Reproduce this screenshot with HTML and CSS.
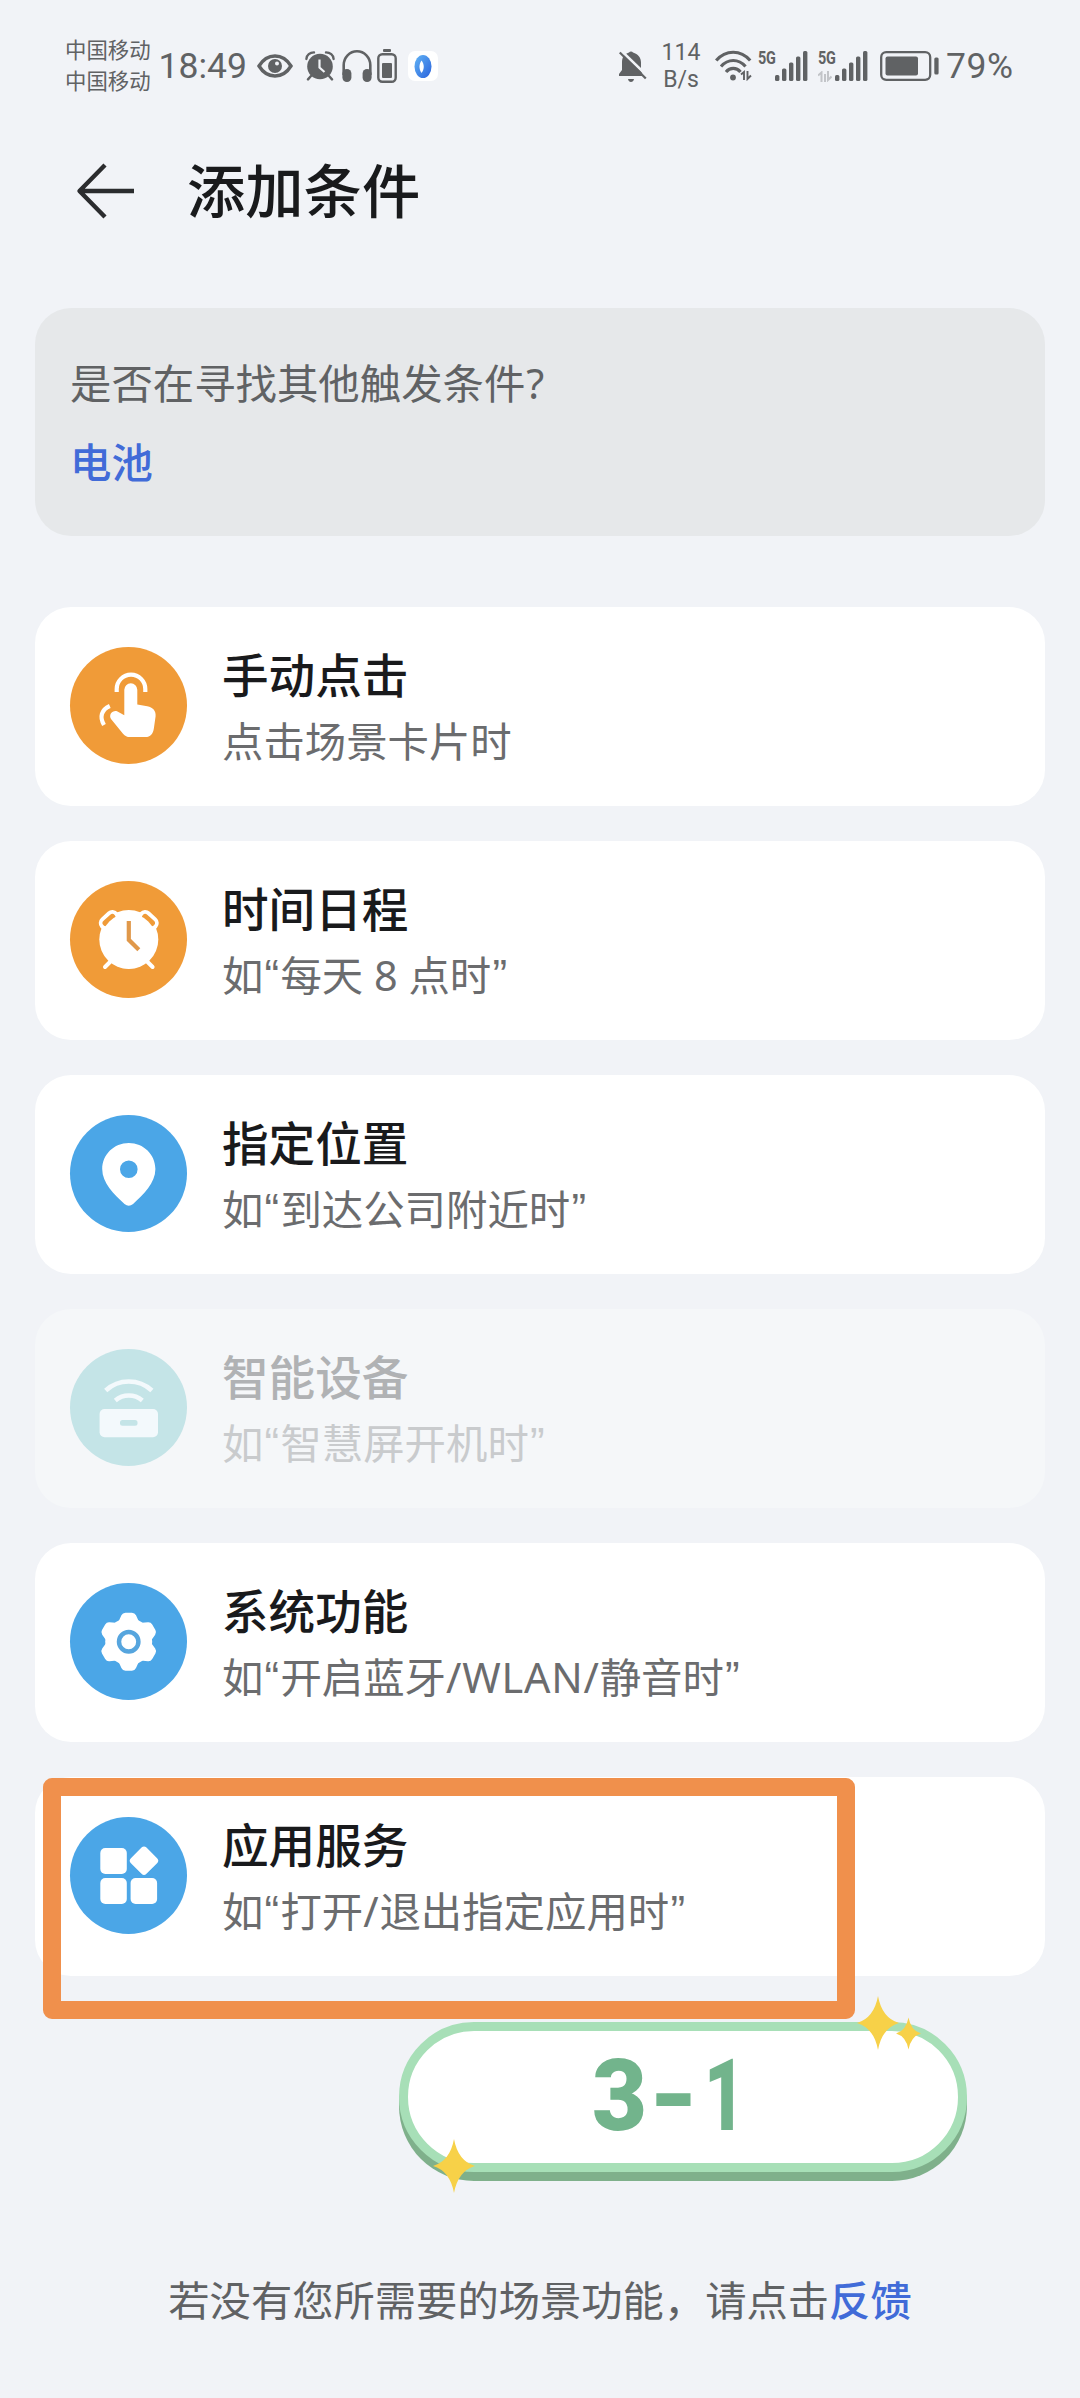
FILE: index.html
```html
<!DOCTYPE html>
<html lang="zh-CN">
<head>
<meta charset="utf-8">
<title>添加条件</title>
<link rel="stylesheet" href="styles.css">
</head>
<body>
<div class="screen">
  <div class="status">
    <div class="status-left">
      <div class="carrier"><span>中国移动</span><span>中国移动</span></div>
      <span class="clock">18:49</span>
      <svg class="i-eye" width="36" height="24" viewBox="0 0 36 24"><path d="M2 12C6 5.500 11.500 2 18 2s12 3.500 16 10c-4 6.500-9.500 10-16 10S6 18.500 2 12z" fill="none" stroke="#606264" stroke-width="3.400"/><circle cx="18" cy="12" r="7" fill="#606264"/><circle cx="20" cy="9.500" r="2" fill="#f1f3f7"/></svg>
      <svg class="i-alarm" width="30" height="30" viewBox="0 0 30 30"><g fill="none" stroke="#606264" stroke-width="2.400" stroke-linecap="round"><path d="M1.400 8C1.600 4 5 1.400 9 1.400M28.600 8C28.400 4 25 1.400 21 1.400M6 25l-3 3.400M24 25l3 3.400"/></g><circle cx="15" cy="15.500" r="12.800" fill="#606264"/><path d="M14.500 8.500v8l5 4.500" fill="none" stroke="#f1f3f7" stroke-width="2.200"/></svg>
      <svg class="i-phones" width="30" height="32" viewBox="0 0 30 32"><path d="M1.700 25V15a13.300 13.700 0 0 1 26.600 0v10" fill="none" stroke="#606264" stroke-width="2.600"/><rect x=".4" y="19" width="9" height="13" rx="4.400" fill="#606264"/><rect x="20.600" y="19" width="9" height="13" rx="4.400" fill="#606264"/></svg>
      <svg class="i-cell" width="20" height="34" viewBox="0 0 20 34"><rect x="6" y="0" width="8" height="3" rx="1" fill="#606264"/><rect x="1.300" y="5.300" width="17.400" height="27.400" rx="4" fill="none" stroke="#606264" stroke-width="2.400"/><rect x="5" y="14" width="10" height="15" rx="1" fill="#606264"/></svg>
      <svg class="i-app" width="30" height="30" viewBox="0 0 30 30"><defs><linearGradient id="ring" x1="0" y1="0" x2="1" y2="1"><stop offset="0" stop-color="#62b4f5"/><stop offset="1" stop-color="#2a62dc"/></linearGradient></defs><rect width="30" height="30" rx="7" fill="#fff"/><ellipse cx="15" cy="15.500" rx="8.500" ry="11.500" fill="url(#ring)"/><path d="M13.500 9.500c3 4 3 8.500 0 12.500-2.700-4-2.700-8.500 0-12.500z" fill="#fff"/></svg>
    </div>
    <div class="status-right">
      <svg class="i-bell" width="30" height="34" viewBox="0 0 30 34"><path d="M11 3.500a2.500 2.500 0 0 1 4 0c5 1.500 8 5 8 10V21l2 6H1v-2l3-4v-7.500c0-5 2-8.500 7-10zM10 30h6c-.5 4-5.500 4-6 0z" fill="#606264"/><path d="M3.500 2l26 25" stroke="#f1f3f7" stroke-width="2.600"/><path d="M1.800 3.500l26 26" stroke="#606264" stroke-width="2.200"/></svg>
      <div class="speed"><span>114</span><span>B/s</span></div>
      <svg class="i-wifi" width="37" height="31" viewBox="0 0 37 31"><g fill="none" stroke="#606264" stroke-width="3.200"><path d="M1.200 10.500c9.500-11 24.500-11 34 0M6 16.500c7-8 17.500-8 24.500 0M11 22c4-4.800 10.500-4.800 14.500 0"/></g><circle cx="18" cy="27.500" r="2.900" fill="#606264"/><path d="M26 24.500l3-2.500v8M32.500 21v8l3.500-3.500" fill="none" stroke="#606264" stroke-width="1.900"/></svg>
      <div class="signal">
        <div class="net"><span>5G</span></div>
        <svg width="33" height="30" viewBox="0 0 33 30"><g fill="#606264"><rect x="0" y="24" width="4.400" height="6" rx="1.500"/><rect x="7" y="17.500" width="4.400" height="12.500" rx="1.500"/><rect x="14" y="11.500" width="4.400" height="18.500" rx="1.500"/><rect x="21" y="5.500" width="4.400" height="24.500" rx="1.500"/><rect x="28" y="0" width="4.400" height="30" rx="1.500"/></g></svg>
      </div>
      <div class="signal">
        <div class="net"><span>5G</span><svg width="14" height="11" viewBox="0 0 14 11"><path d="M0 4.500L3.500 1.500V11M7 11V3M10 0v9l3.500-3.500" fill="none" stroke="#c2c4c8" stroke-width="2"/></svg></div>
        <svg width="33" height="30" viewBox="0 0 33 30"><g fill="#606264"><rect x="0" y="24" width="4.400" height="6" rx="1.500"/><rect x="7" y="17.500" width="4.400" height="12.500" rx="1.500"/><rect x="14" y="11.500" width="4.400" height="18.500" rx="1.500"/><rect x="21" y="5.500" width="4.400" height="24.500" rx="1.500"/><rect x="28" y="0" width="4.400" height="30" rx="1.500"/></g></svg>
      </div>
      <svg class="i-batt" width="59" height="30" viewBox="0 0 59 30"><rect x="1.200" y="1.200" width="49" height="27.600" rx="5" fill="none" stroke="#606264" stroke-width="2.300"/><rect x="5.500" y="5.500" width="32.500" height="19" rx="2" fill="#606264"/><rect x="54.300" y="6.500" width="4.300" height="17" rx="1.500" fill="#606264"/></svg>
      <span class="percent">79%</span>
    </div>
  </div>

  <header class="header">
    <svg width="60" height="58" viewBox="0 0 60 58"><path d="M29 3L3.500 29 29 55M4 29h54" fill="none" stroke="#2b2c2e" stroke-width="4.400" stroke-linejoin="round"/></svg>
    <h1>添加条件</h1>
  </header>

  <section class="prompt">
    <p>是否在寻找其他触发条件<span class="ask">?</span></p>
    <a class="link">电池</a>
  </section>

  <main class="list">
    <div class="card">
      <svg class="icon orange" viewBox="0 0 117 117"><g fill="none" stroke="#fff" stroke-width="4.200"><path d="M46.700 45v-3a14.300 14.300 0 0 1 28.600 0v3M39.800 59c-8.500 3.800-10.500 11-5.800 19"/></g><path fill="#fff" d="M54.300 42.800a6.500 6.500 0 0 1 13 0v14.700l10 1.700c5.500 1 8.800 4.500 8.300 10l-1.700 12c-.8 5.500-3.500 8.800-8.500 8.800H60c-3 0-5-.8-7-3.300L41 72c-2.500-4 1-8.800 6-7.800l7.300 4z"/></svg>
      <div class="text"><h2>手动点击</h2><p>点击场景卡片时</p></div>
    </div>
    <div class="card">
      <svg class="icon orange" viewBox="0 0 117 117"><circle cx="58.800" cy="58.500" r="29.500" fill="#fff"/><g fill="#f09b38" stroke="#fff" stroke-width="3.800"><rect x="29.500" y="34" width="19" height="10" rx="5" transform="rotate(-42 39 39)"/><rect x="69" y="34" width="19" height="10" rx="5" transform="rotate(42 78.500 39)"/></g><circle cx="58.800" cy="60" r="27.500" fill="#fff"/><path d="M35 86l8-8M82.600 86l-8-8" stroke="#fff" stroke-width="4" stroke-linecap="round"/><path d="M58.800 40v18.800l10 10" fill="none" stroke="#e0984a" stroke-width="4.200"/></svg>
      <div class="text"><h2>时间日程</h2><p>如<span class="q">“</span>每天 8 点时<span class="q">”</span></p></div>
    </div>
    <div class="card">
      <svg class="icon blue" viewBox="0 0 117 117"><path fill="#fff" fill-rule="evenodd" d="M58.800 28C73.600 28 85.400 39.500 85.400 54c0 14-12 25.500-22.300 35q-4.300 3.500-8.600 0C44.200 79.500 32.200 68 32.200 54 32.200 39.500 44 28 58.800 28zm0 17.500a8.800 8.800 0 1 0 0 17.600 8.800 8.800 0 1 0 0-17.600z"/></svg>
      <div class="text"><h2>指定位置</h2><p>如<span class="q">“</span>到达公司附近时<span class="q">”</span></p></div>
    </div>
    <div class="card disabled">
      <svg class="icon teal" viewBox="0 0 117 117"><path fill="none" stroke="#f3f9fc" stroke-width="4.600" d="M35.700 41.500c13-12 33.200-12 46.200 0M45.300 51.500c8-6.600 19-6.600 27 0"/><rect x="29.600" y="60" width="58.400" height="28.300" rx="5" fill="#f3f9fc"/><rect x="50" y="71" width="17.500" height="5.800" rx="2.500" fill="#c4e4e7"/></svg>
      <div class="text"><h2>智能设备</h2><p>如<span class="q">“</span>智慧屏开机时<span class="q">”</span></p></div>
    </div>
    <div class="card">
      <svg class="icon blue" viewBox="0 0 117 117"><circle cx="58.700" cy="58.700" r="23.500" fill="#fff"/><g fill="#fff" stroke="#fff" stroke-width="9" stroke-linejoin="round"><path d="M55.500 34.200h6.400l5 11v27l-5 11h-6.400l-5-11v-27z"/><path d="M55.500 34.200h6.400l5 11v27l-5 11h-6.400l-5-11v-27z" transform="rotate(60 58.700 58.700)"/><path d="M55.500 34.200h6.400l5 11v27l-5 11h-6.400l-5-11v-27z" transform="rotate(120 58.700 58.700)"/></g><circle cx="58.700" cy="58.700" r="9.700" fill="#fff" stroke="#56a5de" stroke-width="4.500"/></svg>
      <div class="text"><h2>系统功能</h2><p>如<span class="q">“</span>开启蓝牙<span class="latin">/WLAN/</span>静音时<span class="q">”</span></p></div>
    </div>
    <div class="card">
      <svg class="icon blue" viewBox="0 0 117 117"><g fill="#fff"><rect x="30.300" y="31" width="26.500" height="26" rx="5"/><rect x="30.300" y="61" width="26.500" height="26" rx="5"/><rect x="60.600" y="61" width="26.500" height="26" rx="5"/><rect x="63" y="32.700" width="22" height="22" rx="3.500" transform="rotate(45 74 43.700)"/></g></svg>
      <div class="text"><h2>应用服务</h2><p>如<span class="q">“</span>打开<span class="latin">/</span>退出指定应用时<span class="q">”</span></p></div>
    </div>
  </main>

  <footer class="footer">若没有您所需要的场景功能，请点击<a class="link">反馈</a></footer>

  <div class="highlight"></div>
  <div class="badge">
    <div class="step"><span>3</span><span class="dash">-</span><span class="one">1</span></div>
    <svg class="star star-a" viewBox="-21 -27 42 54"><path d="M0-27Q4-5 21 0 4 5 0 27-4 5-21 0-4-5 0-27z"/></svg>
    <svg class="star star-b" viewBox="-21 -27 42 54"><path d="M0-27Q4-5 21 0 4 5 0 27-4 5-21 0-4-5 0-27z"/></svg>
    <svg class="star star-c" viewBox="-21 -27 42 54"><path d="M0-27Q4-5 21 0 4 5 0 27-4 5-21 0-4-5 0-27z"/></svg>
  </div>
</div>
</body>
</html>
```
FILE: styles.css
```css
* { box-sizing: border-box; margin: 0; padding: 0; }
body {
  background: #f1f3f7;
  font-family: "Noto Sans", "Noto Sans CJK SC", sans-serif;
  color: #606264;
}
svg { display: block; flex: none; }
.screen { position: relative; width: 1080px; height: 2398px; overflow: hidden; }

/* Status bar */
.status {
  display: flex;
  justify-content: space-between;
  height: 131px;
  padding: 0 65px 0 65px;
}
.status-left, .status-right { display: flex; align-items: center; }
.carrier { display: flex; flex-direction: column; font-size: 21.400px; line-height: 30.500px; }
.clock { margin-left: 8px; width: 90px; font-family: "Roboto", sans-serif; font-size: 35.500px; line-height: 40px; white-space: nowrap; }
.i-eye { margin-left: 8px; }
.i-alarm { margin-left: 12px; }
.i-phones { margin-left: 7px; }
.i-cell { margin-left: 5px; }
.i-app { margin-left: 11px; }
.speed {
  display: flex;
  flex-direction: column;
  align-items: center;
  width: 42px;
  margin-left: 12px;
  font-family: "Roboto", sans-serif;
  font-size: 23px;
  line-height: 27px;
}
.i-wifi { margin-left: 13px; }
.signal { display: flex; height: 30px; margin-left: 6px; }
.signal + .signal { margin-left: 10px; }
.net { display: flex; flex-direction: column; justify-content: space-between; width: 17px; height: 31px; }
.net span { font: 700 18.500px/15px "Roboto", sans-serif; letter-spacing: -0.5px; transform: scaleX(.78); transform-origin: left; }
.i-batt { margin-left: 12px; }
.percent { margin-left: 7px; width: 69px; font-family: "Roboto", sans-serif; font-size: 35.500px; line-height: 40px; letter-spacing: 0.6px; white-space: nowrap; }

/* Page header */
.header { display: flex; align-items: center; height: 120px; padding-left: 76px; }
.header h1 { margin-left: 51px; font-size: 58.300px; line-height: 80px; font-weight: 500; color: #191a1c; }

.link { color: #416bd8; font-weight: 500; }
.ask { margin-left: 1px; }

.prompt {
  display: flex;
  flex-direction: column;
  gap: 19px;
  height: 228px;
  margin: 57px 35px 0;
  padding: 45px 35px 0;
  border-radius: 36px;
  background: #e6e8ea;
  font-size: 41.400px;
  line-height: 60px;
}

/* Condition cards */
.list { display: flex; flex-direction: column; gap: 35px; margin: 71px 35px 0; }
.card {
  display: flex;
  align-items: center;
  height: 199px;
  padding-left: 35px;
  border-radius: 36px;
  background: #fff;
}
.icon { width: 117px; height: 117px; margin-top: -2px; border-radius: 50%; }
.orange { background: #f09b38; }
.blue { background: #4ba6e7; }
.teal { background: #c4e4e7; }
.text { margin-left: 35px; padding-top: 2px; white-space: nowrap; }
.text h2 { font-size: 46.600px; line-height: 66px; font-weight: 500; color: #191a1c; }
.text p { font-size: 41.400px; line-height: 66px; color: #6b6c6e; }
.q { padding: 0 1.200px; font-family: "Liberation Sans", sans-serif; font-size: 44px; line-height: 1; }
.latin { letter-spacing: 0.8px; }
.disabled { background: #f5f7f9; }
.disabled h2 { color: #b0b2b4; }
.disabled p { color: #c9cbcd; }

.footer { margin-top: 294px; text-align: center; font-size: 41.300px; line-height: 60px; }

/* Tutorial annotations drawn over the page */
.highlight {
  position: absolute;
  left: 43px;
  top: 1778px;
  width: 812px;
  height: 241px;
  border: 18px solid #f0904c;
  border-radius: 9px;
}
.badge {
  position: absolute;
  left: 399px;
  top: 2022px;
  width: 568px;
  height: 150px;
  padding: 0 0 0 184px;
  border: 9px solid #a7dfb7;
  border-radius: 75px;
  background: #fff;
  box-shadow: 0 9px 0 #7fb08b;
}
.step { display: flex; font: 900 101px/130px "Roboto", sans-serif; color: #72b48c; }
.step span { width: 52px; transform: scaleX(.94); transform-origin: left; }
.step .dash { width: 60px; text-align: center; transform: scaleX(1.150); transform-origin: center; }
.step .one { transform: scaleX(.7); }
.star { position: absolute; fill: #f7d148; }
.star-a { left: 448.500px; top: -35.500px; width: 42px; height: 54px; }
.star-b { left: 488px; top: -14px; width: 25px; height: 33px; }
.star-c { left: 25px; top: 108px; width: 42px; height: 54px; }
```
